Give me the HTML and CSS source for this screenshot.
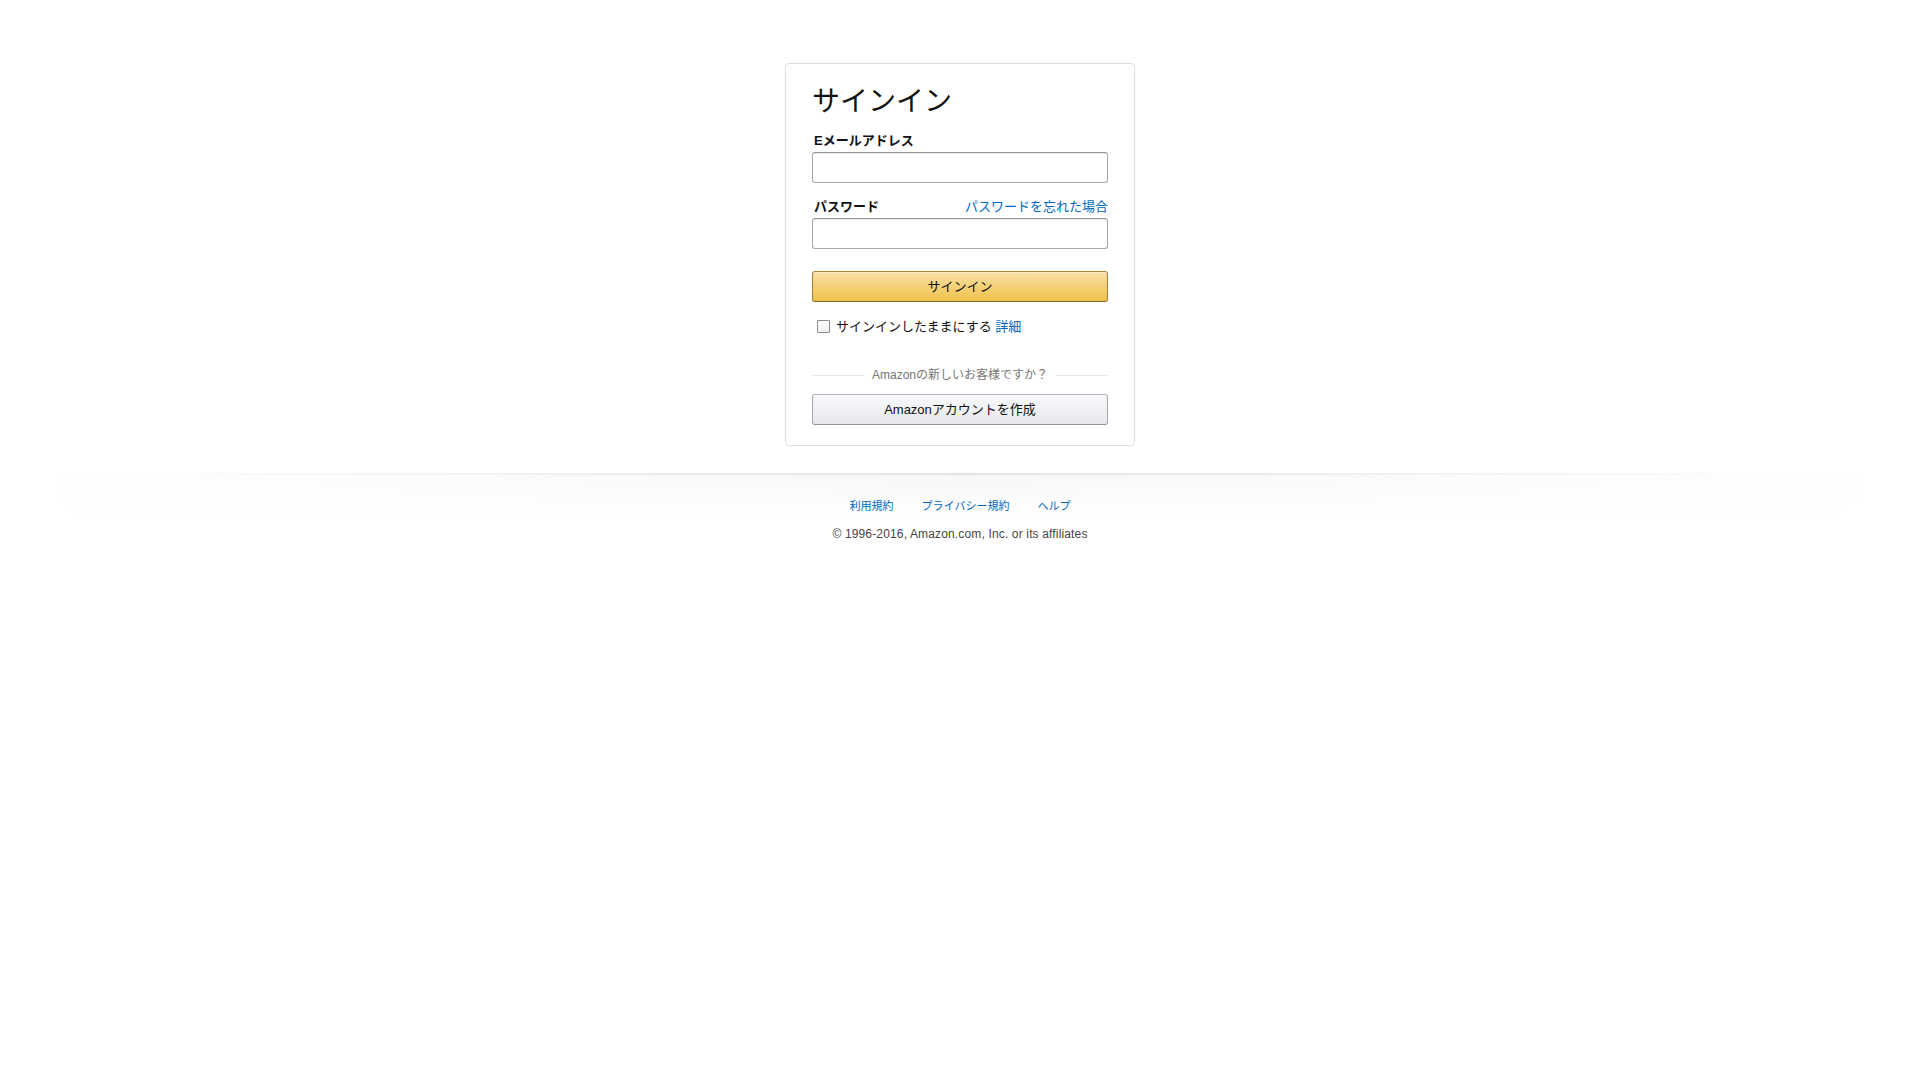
FILE: index.html
```html
<!DOCTYPE html>
<html lang="ja">
<head>
<meta charset="utf-8">
<title>Amazonサインイン</title>
<link rel="stylesheet" href="styles.css">
</head>
<body>
<div class="page">
  <div class="card">
    <h1 class="title">サインイン</h1>
    <form class="form">
      <label class="label">Eメールアドレス</label>
      <input class="input" type="email">
      <div class="label-row">
        <label class="label">パスワード</label>
        <a class="link" href="#">パスワードを忘れた場合</a>
      </div>
      <input class="input" type="password">
      <div class="btn btn-primary">サインイン</div>
      <div class="remember">
        <span class="checkbox"></span>
        <span class="remember-text">サインインしたままにする <a class="link" href="#">詳細</a></span>
      </div>
      <div class="break">
        <span class="break-line"></span>
        <span class="break-text">Amazonの新しいお客様ですか？</span>
        <span class="break-line"></span>
      </div>
      <div class="btn btn-secondary">Amazonアカウントを作成</div>
    </form>
  </div>
  <div class="footer">
    <div class="footer-divider"></div>
    <div class="footer-links">
      <a class="link" href="#">利用規約</a>
      <a class="link" href="#">プライバシー規約</a>
      <a class="link" href="#">ヘルプ</a>
    </div>
    <div class="copyright">© 1996-2016, Amazon.com, Inc. or its affiliates</div>
  </div>
</div>
</body>
</html>
```

FILE: styles.css
```css
html, body {
  margin: 0;
  padding: 0;
  background: #fff;
}
body {
  font-family: "Liberation Sans", "Noto Sans CJK JP", Arial, sans-serif;
  color: #111;
  font-size: 13px;
  line-height: 19px;
}
.page {
  padding-top: 63px;
}
.card {
  width: 350px;
  box-sizing: border-box;
  margin: 0 auto;
  border: 1px solid #ddd;
  border-radius: 4px;
  padding: 20px 26px;
}
.title {
  margin: 0 0 12px;
  font-size: 28px;
  font-weight: 400;
  line-height: 35px;
}
.form {
  display: flex;
  flex-direction: column;
}
.label {
  display: block;
  font-weight: 700;
  padding-left: 2px;
  padding-bottom: 2px;
}
.label-row {
  display: flex;
  justify-content: space-between;
  margin-top: 14px;
}
.link {
  color: #0066c0;
  text-decoration: none;
  font-weight: 400;
}
.input {
  display: block;
  width: 100%;
  height: 31px;
  box-sizing: border-box;
  margin: 0;
  padding: 3px 7px;
  border: 1px solid #a6a6a6;
  border-top-color: #949494;
  border-radius: 3px;
  box-shadow: 0 1px 0 rgba(255,255,255,.5), 0 1px 0 rgba(0,0,0,.07) inset;
  outline: none;
  font: inherit;
}
.btn {
  height: 31px;
  box-sizing: border-box;
  border: 1px solid;
  border-radius: 3px;
  display: flex;
  align-items: center;
  justify-content: center;
  color: #111;
  font-size: 13px;
}
.btn-primary {
  margin-top: 22px;
  background: linear-gradient(to bottom, #f7dfa5, #f0c14b);
  border-color: #a88734 #9c7e31 #846a29;
  box-shadow: 0 1px 0 rgba(255,255,255,.4) inset;
}
.btn-secondary {
  margin-top: 10px;
  background: linear-gradient(to bottom, #f7f8fa, #e7e9ec);
  border-color: #adb1b8 #a2a6ac #8d9096;
  box-shadow: 0 1px 0 rgba(255,255,255,.6) inset;
}
.remember {
  display: flex;
  align-items: center;
  margin-top: 15px;
  padding-left: 5px;
}
.checkbox {
  width: 13px;
  height: 13px;
  box-sizing: border-box;
  border: 1px solid #8c8c8c;
  border-radius: 1px;
  background: linear-gradient(to bottom, #fff, #f0f0f0);
  margin-right: 6px;
  flex: none;
}
.break {
  display: flex;
  align-items: center;
  margin-top: 31px;
  height: 17px;
}
.break-line {
  flex: 1;
  height: 1px;
  background: #e7e7e7;
}
.break-text {
  padding: 0 8px;
  font-size: 12px;
  color: #767676;
  line-height: 17px;
}
.footer {
  margin-top: 27px;
  text-align: center;
}
.footer-divider {
  height: 44px;
  margin: 0 55px -18px;
  background: linear-gradient(to bottom, rgba(0,0,0,.14), rgba(0,0,0,.03) 3px, transparent);
}
.footer-divider::after {
  content: "";
  display: block;
  height: 44px;
  background: linear-gradient(to right, #fff, rgba(255,255,255,0), #fff);
}
.footer-links {
  position: relative;
  display: flex;
  justify-content: center;
  gap: 28px;
  font-size: 11px;
  line-height: 15px;
}
.copyright {
  margin-top: 12px;
  font-size: 12px;
  letter-spacing: 0.15px;
  line-height: 17px;
  color: #444;
}
```
